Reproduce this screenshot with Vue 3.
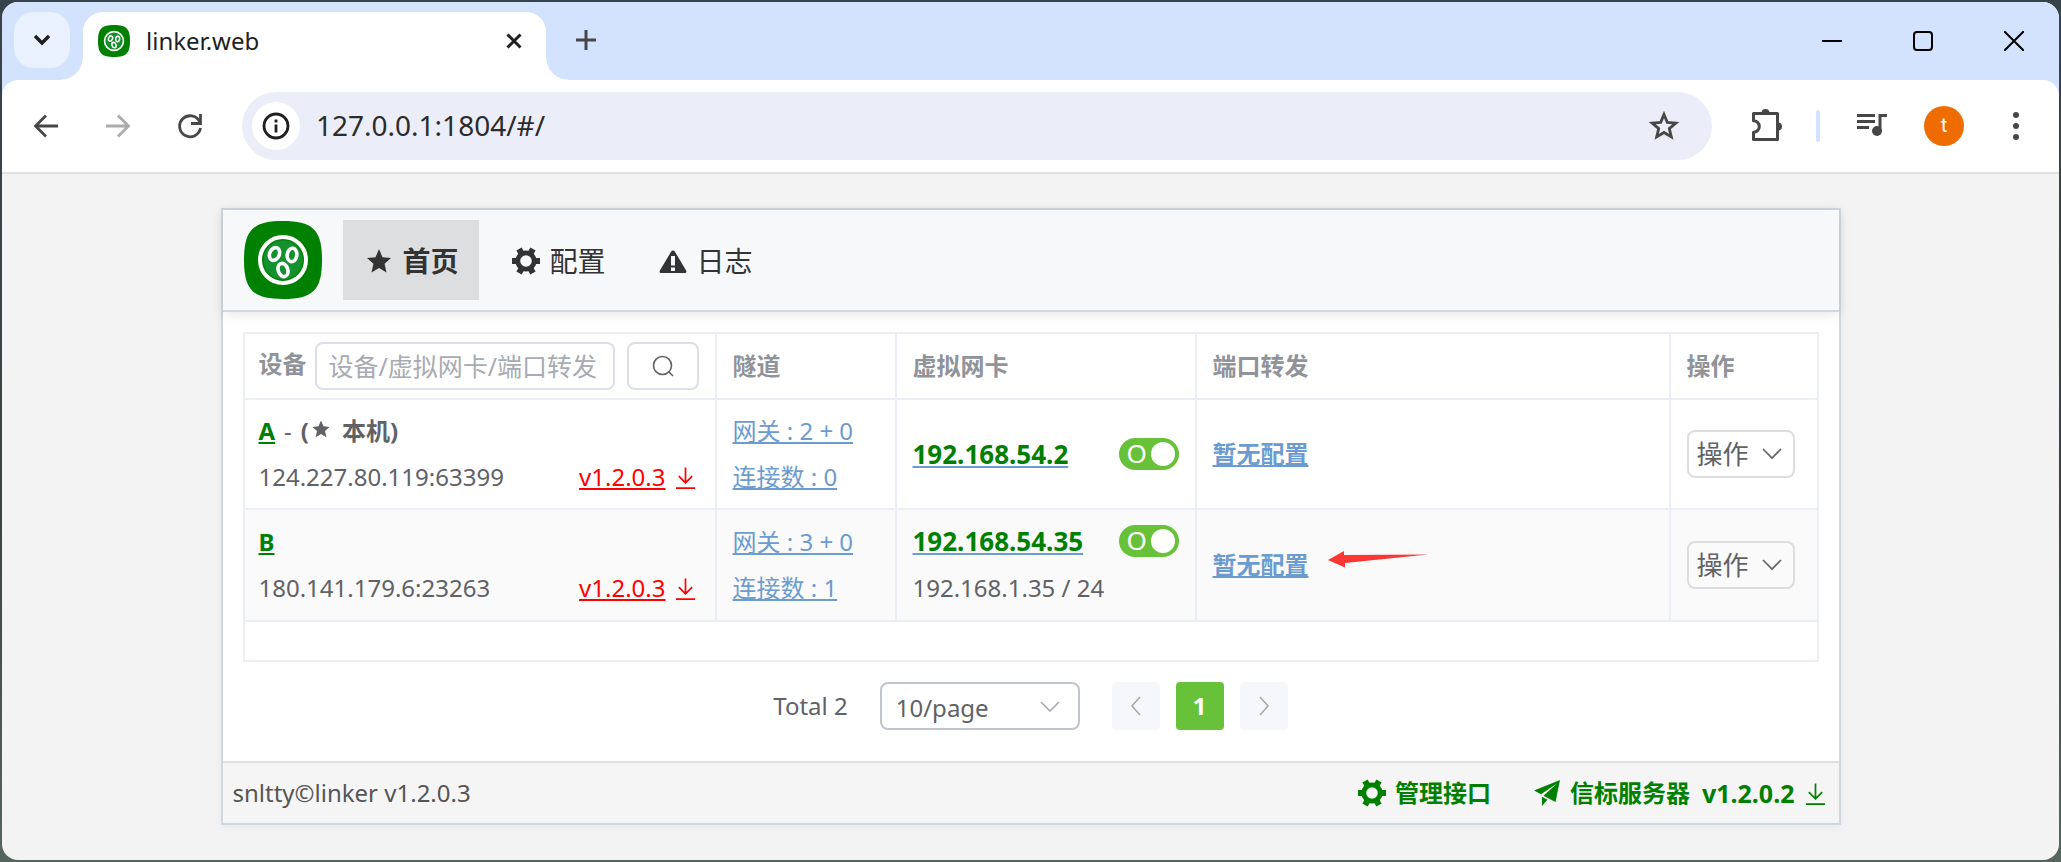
<script setup>
import { ref } from 'vue'

const address = ref('127.0.0.1:1804/#/')
const keyword = ref('')
const pageSize = ref('10')

const menus = [
  { text: '首页', icon: 'star', active: true },
  { text: '配置', icon: 'gear', active: false },
  { text: '日志', icon: 'warn', active: false },
]

const devices = ref([
  {
    name: 'A', self: true, addr: '124.227.80.119:63399', version: 'v1.2.0.3',
    gateway: '2 + 0', connections: 0, ip: '192.168.54.2', lan: '', enabled: true, marked: false,
  },
  {
    name: 'B', self: false, addr: '180.141.179.6:23263', version: 'v1.2.0.3',
    gateway: '3 + 0', connections: 1, ip: '192.168.54.35', lan: '192.168.1.35 / 24', enabled: true, marked: true,
  },
])

const teeth = [0, 60, 120]
</script>

<template>
  <div class="desktop">
    <svg class="defs" aria-hidden="true">
      <symbol id="logo" viewBox="0 0 78 78">
        <path d="M39 0C69 0 78 9 78 39S69 78 39 78 0 69 0 39 9 0 39 0Z" fill="#008000" />
        <circle cx="39" cy="39" r="19.5" fill="#14912f" />
        <circle cx="39" cy="39" r="23" fill="none" stroke="#fff" stroke-width="4" />
        <g fill="none" stroke="#fff" stroke-width="3.6">
          <ellipse cx="30.5" cy="33" rx="4.8" ry="6.6" transform="rotate(24 30.5 33)" />
          <ellipse cx="48" cy="34" rx="4.8" ry="6.8" transform="rotate(8 48 34)" />
          <ellipse cx="39" cy="49" rx="4.8" ry="6.8" transform="rotate(-20 39 49)" />
        </g>
      </symbol>
      <symbol id="gear" viewBox="0 0 28 28">
        <circle cx="14" cy="14" r="8.2" fill="none" stroke="currentColor" stroke-width="4.8" />
        <g v-for="t in teeth" :key="t" :transform="`rotate(${t} 14 14)`" fill="currentColor">
          <rect x="0" y="11" width="5" height="6" />
          <rect x="23" y="11" width="5" height="6" />
        </g>
      </symbol>
      <symbol id="star" viewBox="0 0 28 28">
        <path d="M14 2l3.5 8.300 8.500.8-6.400 5.700 1.900 8.700L14 21l-7.500 4.500 1.900-8.700L2 11.100l8.500-.8z" fill="currentColor" />
      </symbol>
      <symbol id="warn" viewBox="0 0 28 28">
        <path d="M14 3.5c.8 0 1.4.4 1.800 1l11.300 19c.9 1.600 0 2.500-1.400 2.500H2.300C.9 26 0 25.100.9 23.500L12.200 4.500c.4-.6 1-1 1.800-1zM12 9v9.500h4V9zm0 11.500V24h4v-3.500z" fill="currentColor" fill-rule="evenodd" />
      </symbol>
      <symbol id="plane" viewBox="0 0 28 28">
        <path d="M27 1L1 11.500l7 3.700L24 4.500 10.500 16.800 22.500 23zM9 17.800V27l5.500-6.300z" fill="currentColor" />
      </symbol>
      <symbol id="download" viewBox="0 0 22 24">
        <path d="M11 1v15M4 10l7 7 7-7M1 22.500h20" fill="none" stroke="currentColor" stroke-width="1.800" />
      </symbol>
      <symbol id="chevron" viewBox="0 0 20 12">
        <path d="M1 1l9 9 9-9" fill="none" stroke="currentColor" stroke-width="1.600" />
      </symbol>
    </svg>

    <div class="window">
      <header class="tabstrip">
        <button class="tab-search" aria-label="搜索标签页">
          <svg width="18" height="12" viewBox="0 0 18 12"><path d="M2 2l7 7 7-7" fill="none" stroke="#1f1f1f" stroke-width="3.400" /></svg>
        </button>
        <div class="tab">
          <svg class="favicon"><use href="#logo" /></svg>
          <span class="tab-title">linker.web</span>
          <button class="plain" aria-label="关闭标签页">
            <svg width="16" height="16" viewBox="0 0 16 16"><path d="M1.500 1.500l13 13m0-13l-13 13" stroke="#1f1f1f" stroke-width="3" /></svg>
          </button>
        </div>
        <button class="plain new-tab" aria-label="新标签页">
          <svg width="20" height="20" viewBox="0 0 20 20"><path d="M10 0v20M0 10h20" stroke="#474747" stroke-width="3" /></svg>
        </button>
        <div class="controls">
          <button class="plain" aria-label="最小化"><svg width="20" height="20"><path d="M0 10h20" stroke="#000" stroke-width="2" /></svg></button>
          <button class="plain" aria-label="最大化"><svg width="20" height="20"><rect x="1" y="1" width="18" height="18" rx="3" fill="none" stroke="#000" stroke-width="2" /></svg></button>
          <button class="plain" aria-label="关闭"><svg width="20" height="20"><path d="M0 0l20 20M20 0L0 20" stroke="#000" stroke-width="2" /></svg></button>
        </div>
      </header>

      <div class="toolbar-back">
        <div class="toolbar">
          <button class="plain tool" aria-label="后退"><svg width="26" height="24" viewBox="0 0 26 24"><path d="M25 12H3M13 1.500L2.500 12 13 22.500" fill="none" stroke="#474747" stroke-width="2.800" /></svg></button>
          <button class="plain tool" aria-label="前进"><svg width="26" height="24" viewBox="0 0 26 24"><path d="M1 12h22M13 1.500L23.500 12 13 22.500" fill="none" stroke="#ababab" stroke-width="2.800" /></svg></button>
          <button class="plain tool" aria-label="刷新">
            <svg width="26" height="26" viewBox="0 0 26 26"><path d="M22.500 8.500A10.500 10.500 0 1 0 23.500 15" fill="none" stroke="#474747" stroke-width="2.800" /><path d="M23.500 1v9.500H14" fill="none" stroke="#474747" stroke-width="2.800" /></svg>
          </button>
          <div class="omnibox">
            <button class="plain site-info" aria-label="查看网站信息">
              <svg width="28" height="28" viewBox="0 0 28 28"><circle cx="14" cy="14" r="12" fill="none" stroke="#1f1f1f" stroke-width="2.800" /><path d="M14 12.500v8M14 7.500v3" stroke="#1f1f1f" stroke-width="2.800" /></svg>
            </button>
            <input v-model="address" class="address" type="text" aria-label="地址">
            <button class="plain" aria-label="添加书签">
              <svg width="32" height="32" viewBox="0 0 32 32"><path d="M16 4.500l3.300 7.900 8.500.7-6.500 5.500 2 8.300-7.300-4.400-7.300 4.400 2-8.300-6.500-5.500 8.500-.7z" fill="none" stroke="#474747" stroke-width="2.800" /></svg>
            </button>
          </div>
          <button class="plain tool" aria-label="扩展程序">
            <svg width="34" height="36" viewBox="0 0 34 36">
              <path d="M4.500 5.500h24v26h-24v-7.200a5.800 5.800 0 0 0 0-11.600z" fill="none" stroke="#474747" stroke-width="3" stroke-linejoin="round" />
              <path d="M12.500 5a4 4 0 0 1 8 0zM29 14.500a4 4 0 0 1 0 8z" fill="#474747" />
            </svg>
          </button>
          <span class="divider"></span>
          <button class="plain tool" aria-label="媒体控制">
            <svg width="32" height="28" viewBox="0 0 32 28"><path d="M1 3.500h18M1 9.500h18M1 15.500h12" stroke="#474747" stroke-width="2.800" /><path d="M24 18V3.500H31" fill="none" stroke="#474747" stroke-width="3" /><circle cx="21" cy="19" r="5" fill="#474747" /></svg>
          </button>
          <button class="plain tool" aria-label="个人资料"><span class="avatar">t</span></button>
          <button class="plain tool" aria-label="更多">
            <svg width="8" height="28" viewBox="0 0 8 28"><g fill="#474747"><circle cx="4" cy="3" r="3" /><circle cx="4" cy="14" r="3" /><circle cx="4" cy="25" r="3" /></g></svg>
          </button>
        </div>
      </div>

      <main class="page">
        <section class="card">
          <header class="head">
            <svg class="logo" role="img" aria-label="linker"><use href="#logo" /></svg>
            <nav class="menu">
              <a v-for="m in menus" :key="m.text" href="#/" class="menu-item" :class="{ active: m.active }">
                <svg class="menu-icon"><use :href="`#${m.icon}`" /></svg>{{ m.text }}
              </a>
            </nav>
          </header>

          <div class="body">
            <div class="table-wrap">
              <table>
                <colgroup>
                  <col class="c-device"><col class="c-tunnel"><col class="c-tuntap"><col><col class="c-oper">
                </colgroup>
                <thead>
                  <tr>
                    <th>
                      <div class="search">
                        <label for="keyword">设备</label>
                        <input id="keyword" v-model="keyword" type="text" placeholder="设备/虚拟网卡/端口转发">
                        <button aria-label="搜索">
                          <svg width="22" height="22" viewBox="0 0 22 22"><circle cx="10.500" cy="10.500" r="9" fill="none" stroke="#606266" stroke-width="1.600" /><path d="M17 17l4 4" stroke="#606266" stroke-width="1.600" /></svg>
                        </button>
                      </div>
                    </th>
                    <th>隧道</th>
                    <th>虚拟网卡</th>
                    <th>端口转发</th>
                    <th>操作</th>
                  </tr>
                </thead>
                <tbody>
                  <tr v-for="d in devices" :key="d.name">
                    <td>
                      <div class="line">
                        <span><a href="#/" class="name">{{ d.name }}</a><template v-if="d.self"><span class="dash">-</span><strong>(<svg class="self-star"><use href="#star" /></svg>本机)</strong></template></span>
                      </div>
                      <div class="line">
                        <span>{{ d.addr }}</span>
                        <a href="#/" class="version"><span>{{ d.version }}</span><svg class="down"><use href="#download" /></svg></a>
                      </div>
                    </td>
                    <td>
                      <div class="line"><a href="#/" class="link">网关 : {{ d.gateway }}</a></div>
                      <div class="line"><a href="#/" class="link">连接数 : {{ d.connections }}</a></div>
                    </td>
                    <td>
                      <div class="line">
                        <a href="#/" class="link ip">{{ d.ip }}</a>
                        <label class="switch">
                          <input v-model="d.enabled" type="checkbox" :aria-label="`启用 ${d.ip}`">
                          <span>O</span>
                        </label>
                      </div>
                      <div v-if="d.lan" class="line lan">{{ d.lan }}</div>
                    </td>
                    <td>
                      <div class="forward">
                        <a href="#/" class="link strong">暂无配置</a>
                        <svg v-if="d.marked" class="pointer" viewBox="0 0 100 28"><path d="M0 9L16 0V4L100 3.500 17 12V16.500Z" fill="#fd3534" /></svg>
                      </div>
                    </td>
                    <td>
                      <button class="oper">操作<svg class="chevron"><use href="#chevron" /></svg></button>
                    </td>
                  </tr>
                </tbody>
              </table>
            </div>

            <div class="pager">
              <span>Total 2</span>
              <span class="size">
                <select v-model="pageSize" aria-label="每页条数">
                  <option value="10">10/page</option>
                  <option value="20">20/page</option>
                </select>
                <svg class="chevron"><use href="#chevron" /></svg>
              </span>
              <span class="pages">
                <button disabled aria-label="上一页"><svg width="12" height="20"><path d="M10 1L2 10l8 9" fill="none" stroke="#a8abb2" stroke-width="1.600" /></svg></button>
                <button class="current">1</button>
                <button disabled aria-label="下一页"><svg width="12" height="20"><path d="M2 1l8 9-8 9" fill="none" stroke="#a8abb2" stroke-width="1.600" /></svg></button>
              </span>
            </div>
          </div>

          <footer class="foot">
            <span>snltty©linker v1.2.0.3</span>
            <div class="status">
              <a href="#/"><svg class="foot-icon"><use href="#gear" /></svg>管理接口</a>
              <a href="#/"><svg class="foot-icon"><use href="#plane" /></svg>信标服务器<span class="server-version">v1.2.0.2</span><svg class="down"><use href="#download" /></svg></a>
            </div>
          </footer>
        </section>
      </main>
    </div>
  </div>
</template>

<style>
body {
  margin: 0;
}
</style>

<style scoped>
* {
  box-sizing: border-box;
}

.desktop {
  display: flex;
  min-height: 100vh;
  padding: 2px;
  background: linear-gradient(#37434a, #3c4443 60%, #55665f);
  font: 24px/46px "Noto Sans", "Noto Sans CJK SC", sans-serif;
  color: #606266;
}

.defs {
  position: absolute;
  width: 0;
  height: 0;
}

svg {
  display: block;
  flex: none;
}

button,
input,
select {
  margin: 0;
  font: inherit;
  color: inherit;
}

a {
  color: inherit;
  text-decoration: none;
}

.window {
  flex: 1;
  display: flex;
  flex-direction: column;
  min-width: 0;
  border-radius: 16px;
  overflow: hidden;
  background: #f3f3f3;
}

.plain {
  display: flex;
  align-items: center;
  justify-content: center;
  padding: 0;
  border: 0;
  background: none;
}

/* Tab strip */
.tabstrip {
  display: flex;
  height: 78px;
  padding-left: 12px;
  background: #d3e2fd;
}

.tab-search {
  display: flex;
  align-items: center;
  justify-content: center;
  width: 56px;
  height: 56px;
  margin-top: 10px;
  padding: 0;
  border: 0;
  border-radius: 20px;
  background: #eaf1fe;
}

.tab {
  position: relative;
  display: flex;
  gap: 16px;
  width: 463px;
  height: 68px;
  margin: 10px 0 0 13px;
  padding: 0 24px 11px 15px;
  align-items: center;
  border-radius: 20px 20px 0 0;
  background: #fff;
  color: #1f1f1f;
}

.tab::before,
.tab::after {
  content: "";
  position: absolute;
  bottom: 0;
  width: 22px;
  height: 22px;
}

.tab::before {
  right: 100%;
  background: radial-gradient(circle at 0 0, transparent 21px, #fff 22px);
}

.tab::after {
  left: 100%;
  background: radial-gradient(circle at 100% 0, transparent 21px, #fff 22px);
}

.favicon {
  width: 32px;
  height: 32px;
}

.tab-title {
  flex: 1;
}

.new-tab {
  width: 80px;
  height: 76px;
  margin-right: auto;
}

.controls {
  display: flex;
}

.controls button {
  width: 91px;
}

/* Toolbar */
.toolbar-back {
  background: #d3e2fd;
}

.toolbar {
  display: flex;
  align-items: center;
  height: 94px;
  padding: 0 7px 0 8px;
  border-bottom: 2px solid #e0e0e0;
  border-radius: 16px 16px 0 0;
  background: #fff;
}

.tool {
  width: 72px;
  height: 68px;
}

.omnibox {
  flex: 1;
  display: flex;
  align-items: center;
  gap: 16px;
  height: 68px;
  margin: 0 18px 0 16px;
  padding: 0 32px 0 10px;
  border-radius: 34px;
  background: #ebeef8;
}

.site-info {
  width: 48px;
  height: 48px;
  border-radius: 50%;
  background: #fff;
}

.address {
  flex: 1;
  min-width: 0;
  padding: 0 0 2px;
  border: 0;
  outline: 0;
  background: none;
  font-size: 28px;
  line-height: 40px;
  color: #2b2b2b;
}

.divider {
  width: 4px;
  height: 32px;
  margin: 0 16px 0 14px;
  border-radius: 2px;
  background: #d3e2fd;
}

.avatar {
  width: 40px;
  height: 40px;
  border-radius: 50%;
  background: #ef6c00;
  color: #fff;
  font: 20px/38px Roboto, sans-serif;
}

/* Page */
.page {
  padding: 34px 20px;
}

.card {
  max-width: 1620px;
  margin: 0 auto;
  border: 2px solid #d0d7de;
  background: #fff;
  box-shadow: 0 2px 8px rgba(0, 0, 0, 0.05);
}

.head {
  display: flex;
  align-items: center;
  gap: 21px;
  height: 102px;
  padding-left: 21px;
  border-bottom: 2px solid #d0d7de;
  background: #f6f8fa;
  box-shadow: 0 2px 12px rgba(0, 0, 0, 0.1);
}

.logo {
  width: 78px;
  height: 78px;
}

.menu {
  display: flex;
  gap: 11px;
}

.menu-item {
  display: flex;
  align-items: center;
  gap: 10px;
  height: 80px;
  padding: 2px 20px 0 22px;
  font-size: 28px;
  color: #333;
}

.menu-item.active {
  background: #dddee0;
  font-weight: 700;
}

.menu-icon {
  width: 28px;
  height: 28px;
}

.body {
  padding: 20px 20px 31px;
}

/* Device table */
.table-wrap {
  padding-bottom: 38px;
  border: 2px solid #ebeef5;
}

table {
  width: 100%;
  table-layout: fixed;
  border-spacing: 0;
}

.c-device {
  width: 472px;
}

.c-tunnel {
  width: 180px;
}

.c-tuntap {
  width: 300px;
}

.c-oper {
  width: 146px;
}

th,
td {
  padding: 8px 16px;
  border-right: 2px solid #ebeef5;
  border-bottom: 2px solid #ebeef5;
  text-align: left;
}

th {
  color: #909399;
  font-weight: 700;
  line-height: 48px;
}

th:first-child,
td:first-child {
  padding-left: 14px;
}

th:last-child,
td:last-child {
  border-right: 0;
}

tbody tr:nth-child(even) td {
  background: #fafafa;
}

.search {
  display: flex;
}

.search label {
  line-height: 44px;
}

.search input {
  width: 300px;
  height: 48px;
  margin: 0 12px 0 8px;
  padding: 0 12px;
  border: 2px solid #dcdfe6;
  border-radius: 8px;
  background: #fff;
  font-size: 25px;
  font-weight: 400;
}

.search input::placeholder {
  color: #a8abb2;
  opacity: 1;
}

.search button {
  display: flex;
  align-items: center;
  justify-content: center;
  width: 72px;
  height: 48px;
  padding: 0;
  border: 2px solid #dcdfe6;
  border-radius: 8px;
  background: #fff;
}

.line {
  display: flex;
  align-items: center;
  justify-content: space-between;
}

.lan {
  line-height: 48px;
}

.name {
  color: #008000;
  font-weight: 700;
  text-decoration: underline;
}

.dash {
  margin: 0 9px;
}

.self-star {
  display: inline-block;
  width: 20px;
  height: 22px;
  margin: 0 11px 0 2px;
}

.version {
  display: flex;
  align-items: center;
  gap: 9px;
  margin-right: 3px;
  color: #f00;
  text-decoration: underline;
}

.down {
  width: 21px;
  height: 24px;
  margin-top: 2px;
}

.link {
  color: #6c9bd0;
  text-decoration: underline;
}

.ip {
  color: #008000;
  font-size: 26px;
  font-weight: 700;
  text-decoration-color: #6c9bd0;
}

.strong {
  font-weight: 700;
}

.switch {
  position: relative;
  display: flex;
  color: #fff;
}

.switch input {
  appearance: none;
  width: 60px;
  height: 32px;
  border-radius: 16px;
  background: #67c23a;
}

.switch input::after {
  content: "";
  display: block;
  width: 24px;
  height: 24px;
  margin: 4px 4px 4px 32px;
  border-radius: 50%;
  background: #fff;
}

.switch span {
  position: absolute;
  top: 0;
  left: 8px;
  font-size: 26px;
  line-height: 30px;
}

.forward {
  display: flex;
  align-items: center;
  gap: 19px;
}

.pointer {
  width: 100px;
  height: 28px;
}

.oper {
  display: flex;
  align-items: center;
  gap: 13px;
  height: 48px;
  padding: 0 11px 0 8px;
  border: 2px solid #ddd;
  border-radius: 8px;
  background: transparent;
  font-size: 26px;
}

.chevron {
  width: 20px;
  height: 12px;
}

/* Pagination */
.pager {
  display: flex;
  justify-content: center;
  gap: 32px;
  margin-top: 20px;
  line-height: 48px;
}

.size {
  position: relative;
  color: #606266;
}

.size select {
  appearance: none;
  display: block;
  width: 200px;
  height: 48px;
  padding: 0 14px 4px;
  border: 2px solid #c0c4cc;
  border-radius: 8px;
  background: #fff;
}

.size .chevron {
  position: absolute;
  top: 19px;
  right: 20px;
  color: #a8abb2;
  pointer-events: none;
}

.pages {
  display: flex;
  gap: 16px;
}

.pages button {
  display: flex;
  align-items: center;
  justify-content: center;
  width: 48px;
  height: 48px;
  padding: 0;
  border: 0;
  border-radius: 4px;
  background: #f5f7fa;
}

.pages .current {
  background: #67c23a;
  color: #fff;
  font-weight: 700;
}

/* Footer */
.foot {
  display: flex;
  justify-content: space-between;
  padding: 7px 13px 7px 10px;
  border-top: 2px solid #e0e0e0;
  background: #f5f5f5;
  color: #555;
}

.status {
  display: flex;
  gap: 42px;
  color: #008000;
  font-weight: 700;
}

.status a {
  display: flex;
  align-items: center;
}

.foot-icon {
  width: 28px;
  height: 28px;
  margin-right: 9px;
}

.server-version {
  margin: 0 10px 0 12px;
  font-size: 25px;
}
</style>
